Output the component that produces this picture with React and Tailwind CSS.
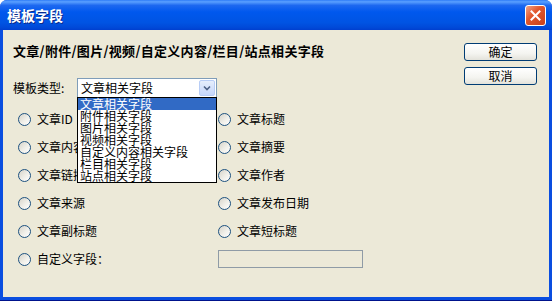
import { useState } from 'react';

const font = { fontFamily: '"Noto Sans CJK SC", "Noto Sans", sans-serif' };

const fieldRows = [
  ['文章ID', '文章标题'],
  ['文章内容', '文章摘要'],
  ['文章链接', '文章作者'],
  ['文章来源', '文章发布日期'],
  ['文章副标题', '文章短标题'],
];

const templateTypes = [
  '文章相关字段',
  '附件相关字段',
  '图片相关字段',
  '视频相关字段',
  '自定义内容相关字段',
  '栏目相关字段',
  '站点相关字段',
];

function Radio({ label }) {
  return (
    <label className="flex items-center gap-[6px] text-[12px] leading-[14px] text-black">
      <span className="h-[13px] w-[13px] shrink-0 rounded-full border border-[#1c5180] bg-[linear-gradient(135deg,#d6d3c9_0%,#f0efe9_55%,#ffffff_100%)]" />
      <span>{label}</span>
    </label>
  );
}

function XpButton({ children }) {
  return (
    <button className="h-[18px] w-[73px] rounded-[3px] border border-[#003c74] bg-[linear-gradient(to_bottom,#ffffff_0%,#f4f4f0_60%,#e3e2da_100%)] text-[12px] leading-[14px] text-black">
      {children}
    </button>
  );
}

export default function App() {
  const [selected] = useState(0);

  return (
    <div
      className="flex h-[301px] w-[552px] flex-col overflow-hidden rounded-t-[7px] bg-[#0a4ee0] px-[3px] pb-[4px] shadow-[inset_0_-1px_0_#00138c]"
      style={font}
    >
      {/* title bar */}
      <div className="-mx-[3px] flex h-[30px] shrink-0 items-center justify-between bg-[linear-gradient(to_bottom,#2f7cf7_0%,#5aa0ff_6%,#1d68f0_18%,#0058ee_40%,#0054e3_75%,#0049d8_92%,#003fcf_100%)] pl-[7px] pr-[6px]">
        <span className="text-[14px] font-bold leading-[16px] text-white [text-shadow:1px_1px_0_#0a2a8a]">
          模板字段
        </span>
        <span className="flex h-[21px] w-[21px] items-center justify-center rounded-[3px] border border-white bg-[linear-gradient(135deg,#f0a48a_0%,#e2582e_40%,#c9401a_100%)]">
          <svg width="11" height="11" viewBox="0 0 11 11">
            <path d="M1.5 1.5 L9.5 9.5 M9.5 1.5 L1.5 9.5" stroke="white" strokeWidth="2" strokeLinecap="square" />
          </svg>
        </span>
      </div>

      {/* client area */}
      <div className="flex flex-1 bg-[#ece9d8]">
        <div className="flex-1 pl-[10px] pt-[13px]">
          <div className="text-[13px] font-bold leading-[16px] tracking-[0.3px] text-black">
            文章/附件/图片/视频/自定义内容/栏目/站点相关字段
          </div>

          <div className="mt-[19px] flex items-center">
            <span className="w-[64px] text-[12px] leading-[14px] text-black">模板类型:</span>
            <div className="relative">
              <div className="flex h-[20px] w-[140px] items-center justify-between border border-[#7f9db9] bg-white pl-[3px] pr-[1px]">
                <span className="text-[12px] leading-[14px] text-black">{templateTypes[selected]}</span>
                <span className="flex h-[16px] w-[16px] items-center justify-center rounded-[2px] border border-[#b8cdf6] bg-[linear-gradient(to_bottom,#e6eefc_0%,#c5d6fb_100%)]">
                  <svg width="8" height="6" viewBox="0 0 8 6">
                    <path d="M1 1.5 L4 4.5 L7 1.5" stroke="#4d6185" strokeWidth="1.6" fill="none" />
                  </svg>
                </span>
              </div>
              <ul className="absolute left-0 top-[19px] z-10 w-[140px] border border-black bg-white">
                {templateTypes.map((t, i) => (
                  <li
                    key={t}
                    className={
                      i === selected
                        ? 'h-[12px] bg-[#316ac5] pl-[2px] text-[12px] leading-[12px] text-white'
                        : 'h-[12px] pl-[2px] text-[12px] leading-[12px] text-black'
                    }
                  >
                    {t}
                  </li>
                ))}
              </ul>
            </div>
          </div>

          <div className="mt-[7px] grid grid-cols-[200px_1fr] pl-[5px]">
            {fieldRows.map(([a, b]) => (
              <div key={a} className="contents">
                <div className="flex h-[28px] items-center">
                  <Radio label={a} />
                </div>
                <div className="flex h-[28px] items-center">
                  <Radio label={b} />
                </div>
              </div>
            ))}
            <div className="flex h-[28px] items-center">
              <Radio label="自定义字段：" />
            </div>
            <div className="flex h-[28px] items-center">
              <div className="h-[18px] w-[145px] border border-[#8f9ba6] bg-[#ece9d8]" />
            </div>
          </div>
        </div>

        <div className="mr-[12px] mt-[13px] flex flex-col gap-[6px]">
          <XpButton>确定</XpButton>
          <XpButton>取消</XpButton>
        </div>
      </div>
    </div>
  );
}
